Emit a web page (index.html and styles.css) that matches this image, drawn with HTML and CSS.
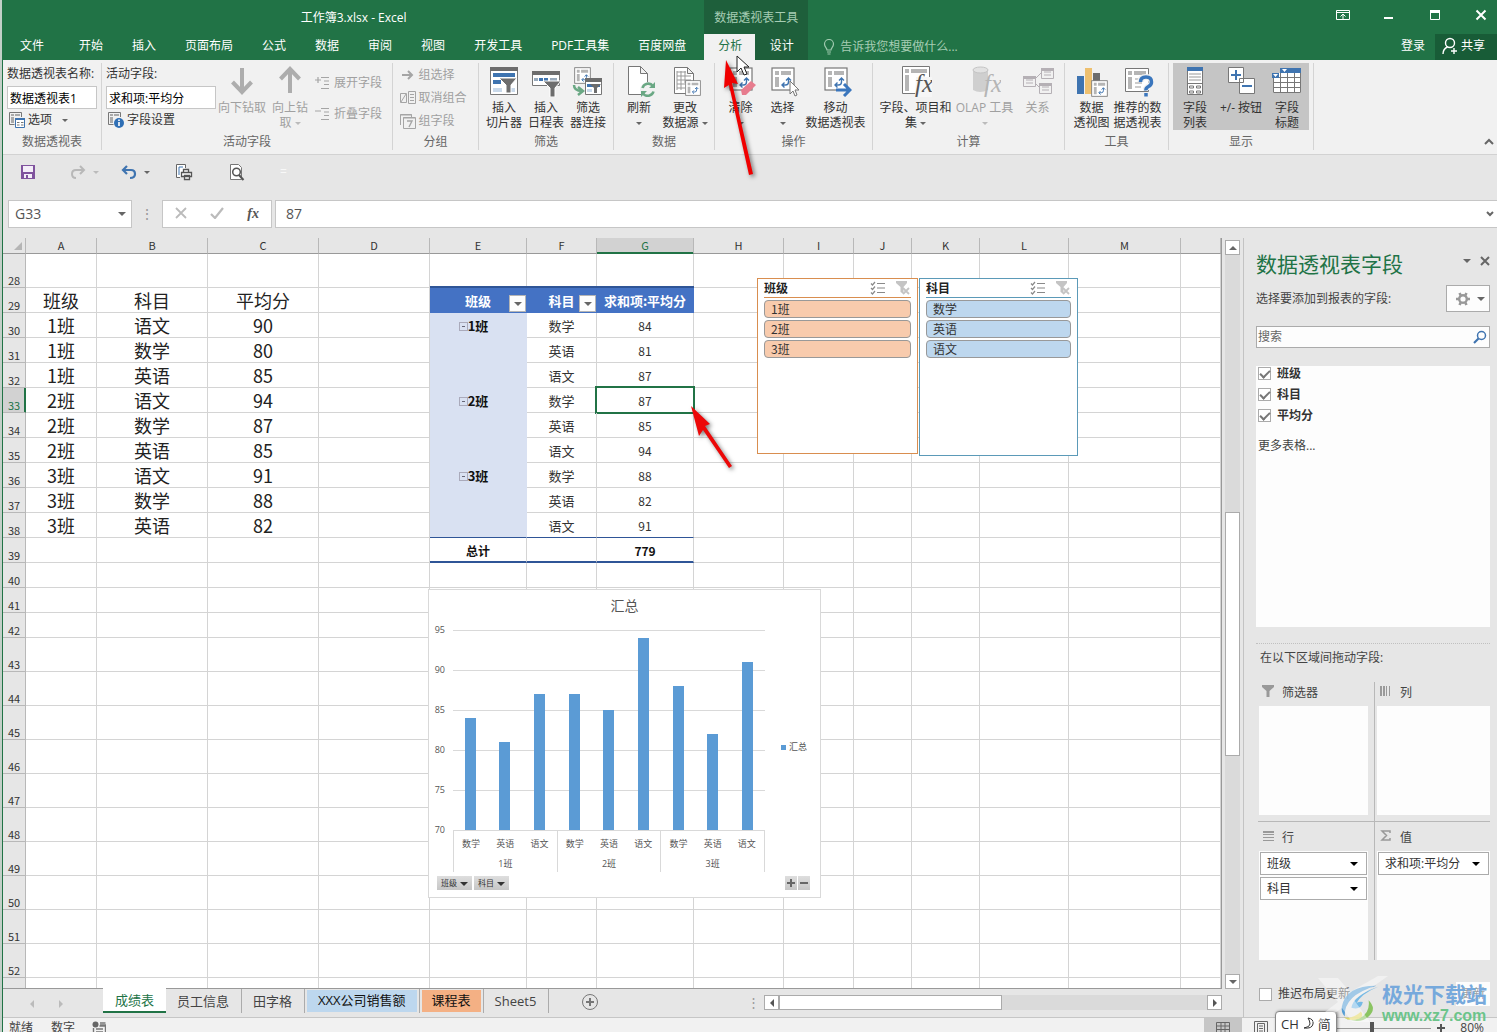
FILE: index.html
```html
<!DOCTYPE html>
<html lang="zh-CN">
<head>
    <meta charset="UTF-8">
    <meta name="viewport" content="width=device-width, initial-scale=1.0">
    <title>工作簿3.xlsx - Excel</title>
    <link rel="stylesheet" href="styles.css">
</head>
<body>
    <!-- shared icon parts -->
    <svg class="defs" aria-hidden="true">
        <symbol id="i-pivot" viewBox="0 0 24 24">
            <rect x="1" y="1" width="22" height="22" fill="#fff" stroke="#777" stroke-width="1.2"/>
            <path d="M4 4h4v4H4zM10 4h10v4H10zM4 10h4v10H4z" fill="#b5b5b5"/>
            <path d="M11.500 18h3q3 0 3-3v-4M13.500 15.500L11 18l2.500 2.500M15 13.500l2.500-2.500 2.500 2.500" fill="none" stroke="#3f74b0" stroke-width="1.400"/>
        </symbol>
        <symbol id="i-multi" viewBox="0 0 16 14">
            <path d="M7 2.500h8M7 7h8M7 11.500h8" stroke="#8a8a8a" stroke-width="1.200"/>
            <path d="M1 2.500l1.500 1.500L5 1M1 7l1.500 1.500L5 5.500M1 11.500L2.500 13 5 10" fill="none" stroke="#8a8a8a" stroke-width="1.200"/>
        </symbol>
        <symbol id="i-clear" viewBox="0 0 16 14">
            <path d="M1 0h11v2L8.500 6v7l-3-2V6L1 2z" fill="#c4c4c4"/>
            <path d="M8 7l6 6M14 7l-6 6" stroke="#c4c4c4" stroke-width="1.800"/>
        </symbol>
    </svg>

    <div class="app">
        <header class="header">
            <div class="doc-title">工作簿3.xlsx - Excel</div>
            <div class="context-title">数据透视表工具</div>
            <div class="window-controls">
                <button class="win-btn" aria-label="功能区显示选项"><svg width="14" height="12" viewBox="0 0 14 12"><path d="M.5 1.500h13v9H.5zM.5 3.500h13M7 10V5.500M4.500 7.500L7 5l2.500 2.500" fill="none" stroke="#fff"/></svg></button>
                <button class="win-btn" aria-label="最小化"><svg width="12" height="12" viewBox="0 0 12 12"><path d="M1 9h9" stroke="#fff" stroke-width="2"/></svg></button>
                <button class="win-btn" aria-label="最大化"><svg width="12" height="12" viewBox="0 0 12 12"><path d="M1.500 2.500h9v8h-9z" fill="none" stroke="#fff"/><path d="M1 1h10v3H1z" fill="#fff"/></svg></button>
                <button class="win-btn" aria-label="关闭"><svg width="12" height="12" viewBox="0 0 12 12"><path d="M1.500 1.500l9 9M10.500 1.500l-9 9" stroke="#fff" stroke-width="2"/></svg></button>
            </div>
            <nav class="tabs">
                <button class="tab file">文件</button>
                <button class="tab">开始</button>
                <button class="tab">插入</button>
                <button class="tab">页面布局</button>
                <button class="tab">公式</button>
                <button class="tab">数据</button>
                <button class="tab">审阅</button>
                <button class="tab">视图</button>
                <button class="tab">开发工具</button>
                <button class="tab">PDF工具集</button>
                <button class="tab">百度网盘</button>
            </nav>
            <nav class="context-tabs">
                <button class="tab active">分析</button>
                <button class="tab">设计</button>
            </nav>
            <div class="header-tools">
                <button class="tell-me"><svg width="12" height="16" viewBox="0 0 12 16"><path d="M4 11C4 9 1.500 8 1.500 5a4.500 4.500 0 0 1 9 0c0 3-2.500 4-2.500 6zM4 13h4M4.500 15h3" fill="none" stroke="#9fc9ae" stroke-width="1.200"/></svg>告诉我您想要做什么...</button>
                <button class="login">登录</button>
                <button class="share"><svg width="16" height="18" viewBox="0 0 16 18"><circle cx="8" cy="6" r="4.500" fill="none" stroke="#fff" stroke-width="1.400"/><path d="M1 17q0-5 4.500-7M12 11v6M9 14h6" fill="none" stroke="#fff" stroke-width="1.400"/></svg>共享</button>
            </div>
        </header>

        <section class="ribbon">
            <div class="group g-table">
                <div class="group-body">
                    <div class="stack">
                        <label for="pt-name">数据透视表名称:</label>
                        <input id="pt-name" type="text" value="数据透视表1">
                        <button class="small-btn"><svg width="16" height="16" viewBox="0 0 16 16"><path d="M.5 12.500V.5h12V5M.5 12.500h5" fill="none" stroke="#777"/><path d="M2 2h3v2H2zM6 2h5v2H6zM2 5h3v6H2z" fill="#aaa"/><path d="M6.500 6.500h9v9h-9z" fill="#fff" stroke="#3f74b0"/><path d="M6 7h10" stroke="#3f74b0" stroke-width="2"/><path d="M8 10.500h2.500M12 10.500h2.500M8 13h2.500M12 13h2.500" stroke="#777"/></svg>选项<i class="caret spaced"></i></button>
                    </div>
                </div>
                <div class="group-label">数据透视表</div>
            </div>

            <div class="group g-active">
                <div class="group-body">
                    <div class="stack wide">
                        <label for="active-field">活动字段:</label>
                        <input id="active-field" type="text" value="求和项:平均分">
                        <button class="small-btn"><svg width="16" height="16" viewBox="0 0 16 16"><path d="M.5 12.500V.5h12V5M.5 12.500h5" fill="none" stroke="#777"/><path d="M2 2h3v2H2zM6 2h5v2H6zM2 5h3v6H2z" fill="#aaa"/><circle cx="11" cy="11" r="5" fill="#2f6fb5"/><path d="M11 7.500v1.500M11 10v4" stroke="#fff" stroke-width="1.600"/></svg>字段设置</button>
                    </div>
                    <button class="big-btn w48" disabled>
                        <svg width="32" height="32" viewBox="0 0 32 32"><path d="M16 3v22M6.500 17L16 27l9.500-10" fill="none" stroke="#adadad" stroke-width="4"/></svg>
                        向下钻取
                    </button>
                    <button class="big-btn w48" disabled>
                        <svg width="32" height="32" viewBox="0 0 32 32"><path d="M16 28V5M6.500 14L16 4l9.500 10" fill="none" stroke="#adadad" stroke-width="4"/></svg>
                        向上钻<br>取 <i class="caret"></i>
                    </button>
                    <div class="stack expand">
                        <button class="small-btn" disabled><svg width="16" height="14" viewBox="0 0 16 14"><path d="M0 4h6M3 1v6M6 1.500h8M9 5h5M9 8.500h5M6 12.500h8" fill="none" stroke="#a5a5a5" stroke-width="1.200"/></svg>展开字段</button>
                        <button class="small-btn" disabled><svg width="16" height="14" viewBox="0 0 16 14"><path d="M0 4h6M6 1.500h8M9 5h5M9 8.500h5M6 12.500h8" fill="none" stroke="#a5a5a5" stroke-width="1.200"/></svg>折叠字段</button>
                    </div>
                </div>
                <div class="group-label">活动字段</div>
            </div>

            <div class="group g-group">
                <div class="group-body">
                    <div class="stack grouping">
                        <button class="small-btn" disabled><svg width="16" height="16" viewBox="0 0 16 16"><path d="M2 8h10M8 4l4 4-4 4" fill="none" stroke="#a5a5a5" stroke-width="2"/></svg>组选择</button>
                        <button class="small-btn" disabled><svg width="16" height="16" viewBox="0 0 16 16"><path d="M.5 3.500h6v9h-6zM1 12l5-8M8.500 1.500h7v12h-7zM10 4.500h4M10 7.500h4M10 10.500h4" fill="none" stroke="#a5a5a5"/></svg>取消组合</button>
                        <button class="small-btn" disabled><svg width="16" height="16" viewBox="0 0 16 16"><path d="M.5 12V1.500h11V4M3.500 4.500h12v11h-12zM0 2h12M3 5h12" fill="none" stroke="#a5a5a5"/><path d="M7 8h5l-3 6" fill="none" stroke="#a5a5a5" stroke-width="1.400"/></svg>组字段</button>
                    </div>
                </div>
                <div class="group-label">分组</div>
            </div>

            <div class="group g-filter">
                <div class="group-body">
                    <button class="big-btn w42">
                        <svg width="32" height="32" viewBox="0 0 32 32"><path d="M2.500 2.500h27v27h-27z" fill="#fff" stroke="#777"/><path d="M2 2h28v4H2z" fill="#6d6d6d"/><path d="M5 8h22v4H5zM5 15h8v4H5z" fill="#3f74b0"/><path d="M5 23h9v4H5zM23 23h4v4h-4z" fill="#c9d9ea"/><path d="M11 13h18l-6 7v8h-5v-8z" fill="#6d6d6d" stroke="#fff"/></svg>
                        插入<br>切片器
                    </button>
                    <button class="big-btn w42">
                        <svg width="32" height="32" viewBox="0 0 32 32"><path d="M2.500 6.500h27v14h-27z" fill="#fff" stroke="#777"/><path d="M2 6h28v4H2z" fill="#6d6d6d"/><path d="M4 13h4v3H4zM20 13h7v3h-7z" fill="#9ab"/><path d="M9 13h4v3H9zM14 13h4v3h-4z" fill="#3f74b0"/><path d="M13 16h18l-6 7v9h-5v-9z" fill="#6d6d6d" stroke="#fff"/></svg>
                        插入<br>日程表
                    </button>
                    <button class="big-btn w42">
                        <svg width="32" height="32" viewBox="0 0 32 32"><use href="#i-pivot" x="2" y="2" width="17" height="17"/><path d="M13.500 13.500h16v16h-16z" fill="#fff" stroke="#777"/><path d="M13 13h17v4H13z" fill="#6d6d6d"/><path d="M15 19h13v3H15z" fill="#3f74b0"/><path d="M15 24h5v3h-5z" fill="#c9d9ea"/><path d="M18 19h11l-4 4v5h-3v-5z" fill="#6d6d6d"/><path d="M2 20q0 6 8 6M6 22l5 4-5 4" fill="none" stroke="#6aa884" stroke-width="2.500"/></svg>
                        筛选<br>器连接
                    </button>
                </div>
                <div class="group-label">筛选</div>
            </div>

            <div class="group g-data">
                <div class="group-body">
                    <button class="big-btn w42">
                        <svg width="32" height="32" viewBox="0 0 32 32"><path d="M5.500 1.500h12l7 7v21h-19zM17.500 1.500v7h7" fill="#fff" stroke="#777"/><circle cx="25" cy="25" r="8" fill="#f1f1f1"/><path d="M19.500 23a6 6 0 0 1 10.500-2M30.500 26.500a6 6 0 0 1-10.500 2" fill="none" stroke="#6aa884" stroke-width="2.600"/><path d="M32 17v6h-6zM18 32v-6h6z" fill="#6aa884"/></svg>
                        刷新<br><i class="caret"></i>
                    </button>
                    <button class="big-btn w52">
                        <svg width="32" height="32" viewBox="0 0 32 32"><path d="M5.500 2.500h13l6 6v20h-19zM18.500 2.500v6h6" fill="#fff" stroke="#777"/><path d="M8 7h9M8 11h14M8 15h14M8 19h8M8 23h8M8 6v19M12 6v19M16 6v12" stroke="#999" fill="none"/><use href="#i-pivot" x="16" y="15" width="16" height="16"/></svg>
                        更改<br>数据源 <i class="caret"></i>
                    </button>
                </div>
                <div class="group-label">数据</div>
            </div>

            <div class="group g-action">
                <div class="group-body">
                    <button class="big-btn w42">
                        <svg width="32" height="32" viewBox="0 0 32 32"><use href="#i-pivot" x="4" y="2" width="24" height="24"/><path d="M16 25l10-9 5 4-10 10h-4z" fill="#e77c8e"/></svg>
                        清除<br><i class="caret"></i>
                    </button>
                    <button class="big-btn w42">
                        <svg width="32" height="32" viewBox="0 0 32 32"><use href="#i-pivot" x="4" y="2" width="24" height="24"/><path d="M23 16v13l3-3 2 5 2-1-2-5h4z" fill="#fff" stroke="#777"/></svg>
                        选择<br><i class="caret"></i>
                    </button>
                    <button class="big-btn w64">
                        <svg width="32" height="32" viewBox="0 0 32 32"><use href="#i-pivot" x="4" y="2" width="24" height="24"/><path d="M16 25h13M24 19l6 6-6 6" fill="none" stroke="#3a76bd" stroke-width="3"/></svg>
                        移动<br>数据透视表
                    </button>
                </div>
                <div class="group-label">操作</div>
            </div>

            <div class="group g-calc">
                <div class="group-body">
                    <button class="big-btn w76">
                        <svg width="32" height="32" viewBox="0 0 32 32"><path d="M2.500 1.500h27v27h-27z" fill="#fff" stroke="#777"/><path d="M5 4h4v4H5zM11 4h16v4H11zM5 10h4v16H5z" fill="#b5b5b5"/><path d="M16 12h16v20H15z" fill="#f6f6f6"/><text x="15" y="27" class="fx-icon">fx</text></svg>
                        字段、项目和<br>集 <i class="caret"></i>
                    </button>
                    <button class="big-btn w64" disabled>
                        <svg width="32" height="32" viewBox="0 0 32 32"><path d="M4 5v20q7 4 15 0V5" fill="#cfcfcf"/><ellipse cx="11.500" cy="5" rx="7.500" ry="3" fill="#e2e2e2" stroke="#c4c4c4"/><text x="15" y="27" class="fx-icon dim">fx</text></svg>
                        OLAP 工具<br><i class="caret"></i>
                    </button>
                    <button class="big-btn w42" disabled>
                        <svg width="32" height="32" viewBox="0 0 32 32"><path d="M1.500 11.500h12v10h-12zM19.500 3.500h12v10h-12zM17.500 18.500h12v10h-12zM13 14l6-6M13 18l5 5M4 15h7M4 18h7M22 7h7M22 10h7M20 22h7M20 25h7" fill="none" stroke="#b5b0b5"/><path d="M1 11h13v3H1zM19 3h13v3H19zM17 18h13v3H17z" fill="#b5b0b5"/></svg>
                        关系
                    </button>
                </div>
                <div class="group-label">计算</div>
            </div>

            <div class="group g-tools">
                <div class="group-body">
                    <button class="big-btn w42">
                        <svg width="32" height="32" viewBox="0 0 32 32"><path d="M1 11h7v18H1z" fill="#3f74b0"/><path d="M9 3h7v26H9z" fill="#eec06f"/><path d="M17 8h7v12h-7z" fill="#6d6d6d"/><use href="#i-pivot" x="15" y="15" width="17" height="17"/></svg>
                        数据<br>透视图
                    </button>
                    <button class="big-btn w52">
                        <svg width="32" height="32" viewBox="0 0 32 32"><path d="M3.500 3.500h23v23h-23z" fill="#fff" stroke="#777"/><path d="M6 6h4v4H6zM12 6h12v4H12zM6 12h4v12H6z" fill="#b5b5b5"/><path d="M13 14h9M13 18h7M13 22h6" stroke="#999"/><path d="M18.500 17q0-5 5.500-5t5.500 5q0 3-3 4.500t-2.500 4M24 28v3.500" fill="none" stroke="#f1f1f1" stroke-width="6"/><path d="M18.500 17q0-5 5.500-5t5.500 5q0 3-3 4.500t-2.500 4M24 28v3.500" fill="none" stroke="#3a76bd" stroke-width="3.500"/></svg>
                        推荐的数<br>据透视表
                    </button>
                </div>
                <div class="group-label">工具</div>
            </div>

            <div class="group g-show">
                <div class="group-body shaded">
                    <button class="big-btn w42">
                        <svg width="32" height="32" viewBox="0 0 32 32"><path d="M8.500 2.500h15v27h-15z" fill="#fff" stroke="#777"/><path d="M8 2h16v4H8z" fill="#3f74b0"/><path d="M10 9h12M10 12h12M10 15h12" stroke="#999"/><path d="M8 18.500h16M10.500 21h4v2h-4zM17.500 21h4v2h-4zM10.500 26h4v2h-4zM17.500 26h4v2h-4z" fill="none" stroke="#777"/></svg>
                        字段<br>列表
                    </button>
                    <button class="big-btn w52">
                        <svg width="32" height="32" viewBox="0 0 32 32"><path d="M3.500 2.500h15v15h-15zM14.500 13.500h15v15h-15z" fill="#fff" stroke="#777"/><path d="M6 10h10M11 5v10M17 21h10" stroke="#3f74b0" stroke-width="2"/></svg>
                        +/- 按钮
                    </button>
                    <button class="big-btn w42">
                        <svg width="32" height="32" viewBox="0 0 32 32"><path d="M2 8v20h28V4H10v4z" fill="#fff"/><path d="M2.500 8.500v19h27v-24M2 12.500h28M2 17.500h28M2 22.500h28M9.500 8v20M16.500 8v20M23.500 8v20" fill="none" stroke="#777"/><path d="M9 3h21v5H9zM1 8h7v5H1z" fill="#3f74b0"/><path d="M11 4h5l-2.500 3zM2 9h5l-2.500 3z" fill="#fff"/></svg>
                        字段<br>标题
                    </button>
                </div>
                <div class="group-label">显示</div>
            </div>
            <button class="collapse" aria-label="折叠功能区"><svg width="10" height="8" viewBox="0 0 10 8"><path d="M1 6l4-4 4 4" fill="none" stroke="#666" stroke-width="2"/></svg></button>
        </section>

        <div class="quick-access">
            <button aria-label="保存"><svg width="16" height="16" viewBox="0 0 16 16"><path d="M1 1h14v14H1z" fill="#80539e"/><path d="M3 2h10v6H3zM4 10h8v4H4z" fill="#f4eef8"/><path d="M6 11h2v3H6z" fill="#80539e"/></svg></button>
            <button aria-label="恢复"><svg width="16" height="16" viewBox="0 0 16 16"><path d="M14 6H6q-4 0-4 4t4 4M10 2l4 4-4 4" fill="none" stroke="#b8b8b8" stroke-width="2"/></svg><i class="caret dim"></i></button>
            <button aria-label="撤消"><svg width="16" height="16" viewBox="0 0 16 16"><path d="M2 6h8q4 0 4 4t-5 4M6 2L2 6l4 4" fill="none" stroke="#3f74b0" stroke-width="2.200"/></svg><i class="caret"></i></button>
            <button aria-label="快速打印"><svg width="18" height="18" viewBox="0 0 18 18"><path d="M5 14.500H1.500v-13h9V5" fill="#fff" stroke="#666"/><path d="M4 4h4M4 4v8" stroke="#3f74b0" fill="none"/><path d="M6.500 9.500h10v4h-10zM8.500 6.500h5v3h-5zM9.500 12.500h5v4h-5z" fill="#fff" stroke="#555" stroke-width="1.300"/></svg></button>
            <button aria-label="打印预览"><svg width="18" height="18" viewBox="0 0 18 18"><path d="M2.500 1.500h8l3 3v12h-11z" fill="#fff" stroke="#777"/><circle cx="8.500" cy="9" r="3.800" fill="none" stroke="#555" stroke-width="1.500"/><path d="M11 12l4.500 5" stroke="#555" stroke-width="2"/></svg></button>
            <button class="more" aria-label="自定义快速访问工具栏">=</button>
        </div>

        <div class="formula-bar">
            <div class="name-box">
                <input type="text" value="G33" aria-label="名称框">
                <i class="caret large"></i>
            </div>
            <div class="dots">⋮</div>
            <div class="fx-box">
                <button aria-label="取消"><svg width="12" height="12" viewBox="0 0 12 12"><path d="M1 1l10 10M11 1L1 11" stroke="#bbb" stroke-width="1.800"/></svg></button>
                <button aria-label="输入"><svg width="14" height="12" viewBox="0 0 14 12"><path d="M1 7l4 4 8-10" fill="none" stroke="#bbb" stroke-width="2.200"/></svg></button>
                <button class="fx" aria-label="插入函数">fx</button>
            </div>
            <div class="formula">
                <input type="text" value="87" aria-label="编辑栏">
                <svg width="8" height="6" viewBox="0 0 8 6"><path d="M1 1l3 3 3-3" fill="none" stroke="#666" stroke-width="2"/></svg>
            </div>
        </div>

        <main class="workspace">
            <div class="book">
                <div class="book-main">
                    <div class="sheet">
                        <table class="cells" id="cells"></table>

                        <section class="slicer orange">
                            <header><h3>班级</h3><svg width="16" height="14"><use href="#i-multi"/></svg><svg width="16" height="14"><use href="#i-clear"/></svg></header>
                            <button>1班</button>
                            <button>2班</button>
                            <button>3班</button>
                        </section>
                        <section class="slicer blue">
                            <header><h3>科目</h3><svg width="16" height="14"><use href="#i-multi"/></svg><svg width="16" height="14"><use href="#i-clear"/></svg></header>
                            <button>数学</button>
                            <button>英语</button>
                            <button>语文</button>
                        </section>

                        <section class="chart">
                            <h3>汇总</h3>
                            <div class="chart-body">
                                <div class="y-axis"><span>95</span><span>90</span><span>85</span><span>80</span><span>75</span><span>70</span></div>
                                <div class="plot-wrap">
                                    <div class="plot" id="plot"></div>
                                    <div class="x-axis" id="x-axis"></div>
                                </div>
                                <div class="legend">汇总</div>
                            </div>
                            <footer>
                                <button>班级<i class="caret large"></i></button>
                                <button>科目<i class="caret large"></i></button>
                                <button class="zoom first" aria-label="展开整个字段"><svg width="10" height="10"><path d="M1 5h8M5 1v8" stroke="#666" stroke-width="2"/></svg></button>
                                <button class="zoom" aria-label="折叠整个字段"><svg width="10" height="10"><path d="M1 5h8" stroke="#666" stroke-width="2"/></svg></button>
                            </footer>
                        </section>
                    </div>
                    <div class="vscroll">
                        <button aria-label="向上滚动"><i class="caret up"></i></button>
                        <div class="vtrack"><div class="vthumb"></div></div>
                        <button aria-label="向下滚动"><i class="caret large"></i></button>
                    </div>
                </div>
                <div class="sheet-bar">
                    <div class="sheet-nav"><button aria-label="上一个"><i class="caret left"></i></button><button aria-label="下一个"><i class="caret right"></i></button></div>
                    <button class="sheet-tab active">成绩表</button>
                    <button class="sheet-tab">员工信息</button>
                    <button class="sheet-tab">田字格</button>
                    <button class="sheet-tab tint-blue"><span>XXX公司销售额</span></button>
                    <button class="sheet-tab tint-orange"><span>课程表</span></button>
                    <button class="sheet-tab">Sheet5</button>
                    <button class="add-sheet" aria-label="新工作表"><svg width="18" height="18" viewBox="0 0 18 18"><circle cx="9" cy="9" r="7.500" fill="none" stroke="#777"/><path d="M5 9h8M9 5v8" stroke="#777" stroke-width="2"/></svg></button>
                    <div class="hscroll">
                        <span class="dots">⋮</span>
                        <button aria-label="向左滚动"><i class="caret left"></i></button>
                        <div class="htrack"><div class="hthumb"></div></div>
                        <button aria-label="向右滚动"><i class="caret right"></i></button>
                    </div>
                </div>
            </div>

            <aside class="pane">
                <div class="pane-head">
                    <h2>数据透视表字段</h2>
                    <button aria-label="任务窗格选项"><i class="caret large"></i></button>
                    <button aria-label="关闭"><svg width="10" height="10" viewBox="0 0 10 10"><path d="M1 1l8 8M9 1L1 9" stroke="#666" stroke-width="2"/></svg></button>
                </div>
                <div class="pane-sub">
                    <span>选择要添加到报表的字段:</span>
                    <button class="gear" aria-label="工具"><svg width="14" height="14" viewBox="0 0 14 14"><circle cx="7" cy="7" r="3.800" fill="none" stroke="#999" stroke-width="2.400"/><path d="M3.500 1l1.500 3M10.500 1L9 4M3.500 13L5 10M10.500 13L9 10M0 7h3M11 7h3" stroke="#999" stroke-width="2.600"/></svg><i class="caret large"></i></button>
                </div>
                <div class="search">
                    <input type="text" placeholder="搜索" aria-label="搜索">
                    <svg width="14" height="14" viewBox="0 0 14 14"><circle cx="8.500" cy="5.500" r="4" fill="none" stroke="#3f74b0" stroke-width="1.500"/><path d="M5.500 8.500L1 13" stroke="#3f74b0" stroke-width="2.200"/></svg>
                </div>
                <div class="field-list">
                    <label><input type="checkbox" checked>班级</label>
                    <label><input type="checkbox" checked>科目</label>
                    <label><input type="checkbox" checked>平均分</label>
                    <a href="#">更多表格...</a>
                </div>
                <div class="areas-title">在以下区域间拖动字段:</div>
                <div class="areas">
                    <div class="area">
                        <h4><svg width="14" height="14"><path d="M1 1h12v2L8.500 7v6h-3V7L1 3z" fill="#999"/></svg>筛选器</h4>
                        <div class="drop"></div>
                    </div>
                    <div class="area">
                        <h4><svg width="14" height="14"><path d="M2 2v10M5 2v10" stroke="#999" stroke-width="2"/><path d="M7.500 2v10M10.500 2v10" stroke="#999"/></svg>列</h4>
                        <div class="drop"></div>
                    </div>
                    <div class="area">
                        <h4><svg width="14" height="14"><path d="M2 3h11" stroke="#999" stroke-width="2"/><path d="M2 5.500h11M2 8.500h11M2 11.500h11" stroke="#999"/></svg>行</h4>
                        <div class="drop">
                            <button class="chip">班级<i class="caret large"></i></button>
                            <button class="chip">科目<i class="caret large"></i></button>
                        </div>
                    </div>
                    <div class="area">
                        <h4><svg width="14" height="14"><path d="M11 4V2H3l4.500 4.500L3 11h8V9" fill="none" stroke="#999" stroke-width="1.500"/></svg>值</h4>
                        <div class="drop">
                            <button class="chip">求和项:平均分<i class="caret large"></i></button>
                        </div>
                    </div>
                </div>
                <div class="defer">
                    <label><input type="checkbox">推迟布局更新</label>
                    <button disabled>更新</button>
                </div>
            </aside>
        </main>

        <footer class="status-bar">
            <span>就绪</span>
            <span>数字</span>
            <svg width="14" height="14" viewBox="0 0 14 14"><circle cx="3.500" cy="3.500" r="3" fill="#666"/><path d="M8 2h5.500M1.500 7v6.500h12V5h-6M4 8h7M4 11h7M8 4h6" fill="none" stroke="#777" stroke-width="1.400"/></svg>
            <div class="views">
                <button class="on" aria-label="普通"><svg width="14" height="14" viewBox="0 0 14 14"><path d="M.5 1.500h13v11H.5zM.5 5h13M.5 8.500h13M5 1.500v11M9 1.500v11" fill="none" stroke="#666"/></svg></button>
                <button aria-label="页面布局"><svg width="14" height="14" viewBox="0 0 14 14"><path d="M.5.500h13v13H.5zM3.500 2.500h7v10h-7zM5 5h4M5 7.500h4M5 10h4" fill="none" stroke="#666"/></svg></button>
            </div>
            <input class="zoom-range" type="range" min="0" max="100" value="40" aria-label="缩放">
            <button class="plus" aria-label="放大"><svg width="10" height="10"><path d="M1 5h8M5 1v8" stroke="#555" stroke-width="2"/></svg></button>
            <span class="percent">80%</span>
        </footer>
    </div>

    <!-- floating things above the window -->
    <div class="ime">CH<svg width="13" height="13" viewBox="0 0 13 13"><path d="M6 1q6 1 5 6t-9 4q6-1 6-4T6 1z" fill="none" stroke="#333"/></svg>简</div>
    <div class="watermark">
        <svg class="wm-x" width="80" height="48" viewBox="0 0 80 48"><path d="M6 2h20l12 14L66 0h10L42 24l16 22H40L30 32 10 46H0l26-20z" fill="#fff" opacity=".45"/></svg>
        <svg width="44" height="40" viewBox="0 0 46 40"><path d="M40 2Q8 2 4 24q-1 6 3 10Q6 12 40 2z" fill="#3b8fd0" opacity=".85"/><path d="M42 3Q16 12 14 25q10 3 12-6-6-1-8 3Q24 10 42 3z" fill="#68b4e4" opacity=".9"/><path d="M6 35q6 5 16 1 12-5 10-19 9 9 0 17-10 9-26 1z" fill="#79bd4a" opacity=".85"/><path d="M6 35q10 2 18-6 4 6-4 8-8 2-14-2z" fill="#e3d44a" opacity=".85"/></svg>
        <div class="wm-text"><b>极光下载站</b><span>www.xz7.com</span></div>
    </div>
    <svg class="arrow ribbon-arrow" width="40" height="128" viewBox="0 0 40 128"><path d="M7 1l12 24-6-1 21 91-4 1-20-90-5 3z" fill="#f00000"/></svg>
    <svg class="arrow cell-arrow" width="52" height="72" viewBox="0 0 52 72"><path d="M5 3l19 18-5 2 27 40-3 2-26-38-4 6z" fill="#ec0808"/></svg>
    <svg class="pointer" width="14" height="22" viewBox="0 0 14 22"><path d="M1 1v16l4-4 3 7 3-1-3-7h5z" fill="#fff" stroke="#222"/></svg>

    <script src="script.js"></script>
</body>
</html>
```
FILE: styles.css
```css
* {
    box-sizing: border-box;
}
body {
    margin: 0;
    height: 100vh;
    overflow: hidden;
    font-family: "Open Sans", "Noto Sans CJK SC", sans-serif;
    font-size: 12px;
    line-height: 16px;
    color: #333;
    background: #e6e6e6;
}
button, input {
    font: inherit;
    color: inherit;
    margin: 0;
    padding: 0;
    border: 0;
    background: none;
    outline: none;
}
button {
    white-space: nowrap;
}
h2, h3, h4 {
    margin: 0;
    font-weight: normal;
}
svg {
    flex: none;
}
.defs {
    position: absolute;
    width: 0;
    height: 0;
}
.app {
    display: flex;
    flex-direction: column;
    height: calc(100vh + 6px);
    border-left: 1px solid #217346;
    box-shadow: -2px 0 #c3cfc8;
    margin-left: 2px;
}
.caret {
    display: inline-block;
    flex: none;
    border: 3px solid transparent;
    border-top-color: #666;
    border-bottom: 0;
    margin-left: 3px;
    vertical-align: middle;
}
.caret.spaced { margin-left: 7px; }
.caret.large { border-width: 4px 4px 0; }
.caret.dim { border-top-color: #bbb; }
.caret.up { border-width: 0 4px 4px; border-bottom: 4px solid #666; }
.caret.left { border-width: 4px 4px 4px 0; border-style: solid; border-color: transparent #555; }
.caret.right { border-width: 4px 0 4px 4px; border-style: solid; border-color: transparent #555; }

/* header */
.header {
    display: grid;
    grid-template-columns: auto auto 1fr;
    grid-template-rows: 34px 26px;
    flex: none;
    background: #217346;
    color: #fff;
}
.doc-title, .context-title {
    display: flex;
    align-items: center;
    justify-content: center;
    padding-top: 1px;
}
.context-title {
    background: #1e5f3b;
    color: #a6cdb4;
}
.window-controls {
    display: flex;
    justify-content: flex-end;
}
.win-btn {
    width: 46px;
    padding-left: 13px;
}
.tabs {
    display: flex;
    gap: 1px;
    padding-right: 4px;
}
.tab {
    padding: 0 14px 2px;
}
.tab.file {
    padding: 0 17px 2px;
    margin-right: 3px;
}
.context-tabs {
    display: grid;
    grid-template-columns: 51px 53px;
    background: #1e5f3b;
}
.tab.active {
    background: #f1f1f1;
    color: #217346;
}
.header-tools {
    display: flex;
    align-items: stretch;
}
.tell-me {
    display: flex;
    align-items: center;
    gap: 5px;
    margin-right: auto;
    padding-left: 15px;
    color: #a6cdb4;
}
.login {
    padding: 0 10px 2px;
}
.share {
    display: flex;
    align-items: center;
    gap: 3px;
    padding: 0 12px 2px 7px;
    background: #185c37;
}

/* ribbon */
.ribbon {
    display: flex;
    flex: none;
    height: 95px;
    padding: 3px 0 4px;
    background: #f1f1f1;
    border-bottom: 1px solid #d2d2d2;
}
.group {
    display: flex;
    flex-direction: column;
    flex: none;
    border-right: 1px solid #d4d4d4;
}
.g-table { width: 99px; }
.g-active { width: 291px; }
.g-group { width: 86px; }
.g-filter { width: 135px; }
.g-data { width: 101px; }
.g-action { width: 158px; }
.g-calc { width: 192px; }
.g-tools { width: 104px; }
.g-show { width: 145px; }
.group-body {
    display: flex;
    justify-content: center;
    height: 69px;
    padding-top: 2px;
}
.g-active .group-body {
    justify-content: flex-start;
    padding-left: 4px;
}
.group-body.shaded {
    background: #c5c5c5;
    margin: 0 4px;
}
.group-label {
    flex: 1;
    padding-top: 4px;
    text-align: center;
    color: #666;
}
.stack {
    display: flex;
    flex-direction: column;
    align-items: flex-start;
    flex: none;
    width: 90px;
    padding-top: 1px;
}
.stack.wide {
    width: 110px;
    margin-right: 2px;
}
.stack label { white-space: nowrap; }
.stack input {
    width: 100%;
    height: 23px;
    margin: 4px 0 3px;
    padding: 0 2px;
    color: #000;
    background: #fff;
    border: 1px solid #c6c6c6;
}
.stack.expand {
    width: 72px;
    padding: 10px 0 0 1px;
    gap: 15px;
}
.stack.grouping {
    width: 72px;
    padding-top: 2px;
    gap: 7px;
}
.small-btn {
    display: flex;
    align-items: center;
    gap: 3px;
    height: 16px;
    padding-left: 2px;
}
.stack.grouping .small-btn, .stack.expand .small-btn {
    padding-left: 0;
}
.big-btn {
    display: flow-root;
    flex: none;
    align-self: flex-start;
    line-height: 15px;
    text-align: center;
}
.big-btn svg {
    display: block;
    margin: 0 auto 3px;
}
.big-btn .caret {
    margin-left: 0;
}
.w42 { width: 42px; }
.w48 { width: 48px; }
.w52 { width: 50px; }
.w64 { width: 64px; }
.w76 { width: 74px; }
button:disabled { color: #a0a0a0; }
button:disabled .caret { border-top-color: #bbb; }
.fx-icon {
    font: italic 25px "Liberation Serif", serif;
    fill: #555;
}
.fx-icon.dim { fill: #b5b5b5; }
.collapse {
    margin-left: auto;
    align-self: flex-end;
    width: 16px;
}

/* quick access + formula bar */
.quick-access {
    display: grid;
    grid-template-columns: 50px 51px 54px 53px 52px 16px;
    flex: none;
    height: 45px;
    padding: 8px 0 0 17px;
}
.quick-access button {
    display: flex;
    align-items: center;
    height: 18px;
}
.quick-access .caret { margin-left: 7px; }
.quick-access .more { color: #f8f8f8; }
.formula-bar {
    display: flex;
    flex: none;
    height: 28px;
    margin: 0 0 10px 5px;
    font-size: 14px;
    color: #555;
}
.name-box, .fx-box, .formula {
    display: flex;
    align-items: center;
    background: #fff;
    border: 1px solid #c6c6c6;
}
.name-box {
    width: 124px;
    padding: 0 5px 0 6px;
}
.name-box input {
    flex: 1;
    min-width: 0;
}
.dots {
    width: 30px;
    text-align: center;
    line-height: 28px;
    color: #999;
}
.fx-box {
    width: 110px;
    justify-content: space-between;
    padding: 0 12px;
}
.fx {
    font: italic bold 14px "Liberation Serif", serif;
    color: #555;
}
.formula {
    flex: 1;
    margin-left: 3px;
    padding: 0 3px 0 10px;
    border-right: 0;
}
.formula input { flex: 1; }

/* workspace */
.workspace {
    display: flex;
    flex: 1;
    min-height: 0;
}
.book {
    display: flex;
    flex-direction: column;
    flex: 1;
    min-width: 0;
}
.book-main {
    display: flex;
    flex: 1;
    min-height: 0;
}
.sheet {
    position: relative;
    flex: 1;
    min-width: 0;
    overflow: hidden;
    background: #fff;
    border-right: 1px solid #999;
    border-bottom: 1px solid #999;
}
.cells {
    width: 100%;
    table-layout: fixed;
    border-collapse: separate;
    border-spacing: 0;
    font-family: "Noto Sans CJK SC", sans-serif;
}
.cells th, .cells td {
    position: relative;
    height: 25px;
    padding: 0;
    text-align: center;
    font-weight: normal;
    white-space: nowrap;
    border-right: 1px solid #d4d4d4;
    border-bottom: 1px solid #d4d4d4;
}
.cells th {
    background: #e6e6e6;
    color: #333;
    font-size: 11px;
    line-height: 13px;
    border-color: #b8b8b8;
    vertical-align: bottom;
}
.cells thead th {
    height: 16px;
    line-height: 15px;
    border-bottom-color: #999;
}
.cells thead th.on {
    background: #d2d2d2;
    color: #217346;
    border-bottom-color: #217346;
    box-shadow: inset 0 -1px #217346;
}
.cells tbody th.on {
    background: #d2d2d2;
    color: #217346;
    border-right-color: #217346;
    box-shadow: inset -1px 0 #217346;
}
.cells tr.tall td, .cells tr.tall th { height: 34px; }
.corner::after {
    content: "";
    position: absolute;
    right: 3px;
    bottom: 3px;
    border: 4px solid #b5b5b5;
    border-top-color: transparent;
    border-left-color: transparent;
}
.cells td.data {
    font-size: 18px;
    line-height: 24px;
    color: #222;
}
.cells td.pv {
    padding-top: 2px;
    font-size: 13px;
    line-height: 18px;
    color: #333;
}
.cells td.pv.value { font-size: 12px; }
.cells td.pv-head {
    font-size: 13px;
    font-weight: bold;
    color: #fff;
    background: #4472c4;
    border-color: #4472c4;
    box-shadow: 0 -2px #2f5597;
}
.cells td.pv-label {
    font-weight: bold;
    color: #111;
    background: #d9e1f2;
    border-color: #d9e1f2;
}
.cells td.pv-last { border-bottom-color: #2f5597; }
.cells td.pv-total {
    font-size: 12px;
    font-weight: bold;
    color: #111;
    border-bottom: 2px solid #2f5597;
}
.cells td.pv-label span { position: relative; }
.cells td.pv-label span::before {
    content: "";
    position: absolute;
    left: -9px;
    top: 6px;
    width: 7px;
    height: 7px;
    border: 1px solid #aab;
    background: linear-gradient(#667, #667) center / 3px 1px no-repeat;
}
.cells td.selected::after {
    content: "";
    position: absolute;
    inset: -2px;
    border: 2px solid #217346;
}
.filter-btn {
    position: absolute;
    right: 0;
    bottom: 0;
    display: flex;
    align-items: center;
    justify-content: center;
    width: 17px;
    height: 17px;
    background: #fdfdfd;
    border: 1px solid #b5b5b5;
}
.filter-btn .caret { margin: 0; }

/* slicers */
.slicer {
    position: absolute;
    top: 40px;
    display: flex;
    flex-direction: column;
    gap: 2px;
    padding: 0 6px;
    background: #fff;
    font-family: "Noto Sans CJK SC", sans-serif;
}
.slicer.orange {
    left: 754px;
    width: 161px;
    height: 176px;
    border: 1px solid #d98e4f;
}
.slicer.blue {
    left: 916px;
    width: 159px;
    height: 178px;
    border: 1px solid #5b9ab8;
}
.slicer header {
    display: flex;
    align-items: center;
    gap: 9px;
    height: 19px;
    padding-bottom: 1px;
}
.slicer.orange header { border-bottom: 1px solid #d98e4f; }
.slicer.blue header { border-bottom: 1px solid #5b9ab8; }
.slicer h3 {
    flex: 1;
    font-size: 12px;
    font-weight: bold;
    color: #222;
}
.slicer button {
    height: 18px;
    padding-left: 6px;
    text-align: left;
    line-height: 16px;
    border: 1px solid #999;
    border-radius: 4px;
}
.slicer.orange button { background: #f8cbad; }
.slicer.blue button { background: #bdd7ee; }

/* chart */
.chart {
    position: absolute;
    left: 425px;
    top: 351px;
    display: flex;
    flex-direction: column;
    width: 393px;
    height: 309px;
    background: #fff;
    border: 1px solid #d9d9d9;
    color: #555;
}
.chart h3 {
    padding-top: 6px;
    font-size: 14px;
    line-height: 20px;
    text-align: center;
}
.chart-body {
    display: flex;
    padding-top: 14px;
    font-size: 9px;
}
.y-axis {
    display: flex;
    flex-direction: column;
    gap: 28px;
    width: 16px;
    margin-right: 8px;
    line-height: 12px;
    text-align: right;
}
.y-axis span:first-child { margin-top: -6px; }
.plot-wrap { width: 312px; }
.plot {
    display: grid;
    grid-template-columns: repeat(9, 1fr);
    align-items: end;
    justify-items: center;
    height: 201px;
    border-bottom: 1px solid #d9d9d9;
    background: repeating-linear-gradient(#d9d9d9 0 1px, transparent 1px 40px);
}
.plot i {
    width: 11px;
    background: #5b9bd5;
}
.x-axis {
    display: grid;
    grid-template-columns: repeat(3, 1fr);
    height: 41px;
    border-left: 1px solid #d9d9d9;
    text-align: center;
    line-height: 20px;
}
.x-axis div {
    display: grid;
    grid-template-columns: repeat(3, 1fr);
    grid-template-rows: 20px 18px;
    padding-top: 3px;
    border-right: 1px solid #d9d9d9;
}
.x-axis b {
    grid-column: 1 / 4;
    font-weight: normal;
}
.legend {
    align-self: center;
    margin-left: 16px;
    padding-bottom: 8px;
}
.legend::before {
    content: "";
    display: inline-block;
    width: 5px;
    height: 5px;
    margin-right: 3px;
    background: #5b9bd5;
}
.chart footer {
    display: flex;
    gap: 2px;
    padding: 4px 10px 0 8px;
    font-size: 8px;
    line-height: 14px;
    color: #333;
}
.chart footer button {
    height: 14px;
    padding: 0 4px;
    background: linear-gradient(#dedede, #c6c6c6);
}
.chart footer .caret { border-top-color: #333; }
.chart footer .zoom {
    display: flex;
    align-items: center;
    width: 12px;
    padding: 0 1px;
}
.chart footer .zoom.first {
    margin-left: auto;
    margin-right: -1px;
}

/* scrollbars */
.vscroll {
    display: flex;
    flex-direction: column;
    width: 21px;
    padding: 2px 3px 0;
}
.vscroll button, .hscroll button {
    display: flex;
    align-items: center;
    justify-content: center;
    flex: none;
    width: 15px;
    height: 15px;
    background: #fff;
    border: 1px solid #ababab;
}
.vscroll .caret, .hscroll .caret { margin: 0; }
.vtrack {
    display: flex;
    flex-direction: column;
    flex: 1;
    background: #dadada;
}
.vthumb {
    height: 34%;
    margin-top: auto;
    margin-bottom: 218px;
    background: #fff;
    border: 1px solid #ababab;
}
.sheet-bar {
    display: flex;
    flex: none;
    height: 28px;
    padding-right: 21px;
    font-size: 13px;
    color: #444;
}
.sheet-nav {
    display: flex;
    gap: 22px;
    width: 100px;
    padding: 0 0 2px 24px;
}
.sheet-nav .left { border-right-color: #bbb; }
.sheet-nav .right { border-left-color: #bbb; }
.sheet-tab {
    height: 24px;
    padding: 0 12px 1px 11px;
    border-right: 1px solid #ababab;
}
.sheet-tab.active {
    height: 25px;
    margin-top: -1px;
    padding: 0 12px;
    color: #217346;
    background: #fff;
    border: 0;
    border-bottom: 2px solid #217346;
    position: relative;
}
.sheet-tab span {
    display: block;
    height: 22px;
    padding: 0 11px;
    line-height: 20px;
    color: #111;
}
.sheet-tab.tint-blue, .sheet-tab.tint-orange { padding: 0 2px; }
.tint-blue span { background: #bdd7ee; }
.tint-orange span {
    padding: 0 10px;
    background: #f4b084;
}
.add-sheet {
    margin-left: 32px;
    height: 26px;
}
.add-sheet svg { display: block; }
.hscroll {
    display: flex;
    flex: 0 0 475px;
    height: 15px;
    margin: 6px 0 0 auto;
}
.hscroll .dots { width: 17px; line-height: 15px; text-align: left; }
.htrack {
    flex: 1;
    background: #dadada;
}
.hthumb {
    width: 52%;
    height: 15px;
    background: #fff;
    border: 1px solid #ababab;
}

/* field pane */
.pane {
    display: flex;
    flex-direction: column;
    flex: none;
    width: 254px;
    padding: 0 7px 0 12px;
    border-left: 1px solid #c3c3c3;
}
.pane-head {
    display: flex;
    align-items: center;
    gap: 9px;
    padding: 12px 0 0;
    height: 42px;
}
.pane-head h2 {
    flex: 1;
    font-size: 21px;
    line-height: 28px;
    padding-bottom: 2px;
    color: #217346;
}
.pane-head button {
    display: flex;
    align-self: flex-start;
    height: 22px;
    align-items: center;
}
.pane-sub {
    display: flex;
    justify-content: space-between;
    align-items: center;
    height: 27px;
    margin-top: 5px;
    color: #444;
}
.gear {
    display: flex;
    align-items: center;
    gap: 4px;
    width: 44px;
    height: 27px;
    padding-left: 9px;
    background: #fdfdfd;
    border: 1px solid #ababab;
}
.search {
    display: flex;
    align-items: center;
    height: 22px;
    margin: 14px 0 18px;
    padding: 0 2px 0 1px;
    background: #fdfdfd;
    border: 1px solid #ababab;
}
.search input {
    flex: 1;
    min-width: 0;
    line-height: 18px;
    padding-bottom: 1px;
}
.search input::placeholder { color: #666; }
.field-list {
    flex: 1;
    padding: 0 2px;
    background: #fdfdfd;
}
.field-list label {
    display: flex;
    align-items: flex-start;
    height: 21px;
    font-weight: bold;
    color: #333;
}
.pane input[type="checkbox"] {
    appearance: none;
    width: 13px;
    height: 13px;
    margin: 1px 6px 0 0;
    background: #fff;
    border: 1px solid #ababab;
}
.pane input[type="checkbox"]:checked::after {
    content: "";
    display: block;
    width: 8px;
    height: 4px;
    margin: 2px 0 0 1px;
    border: solid #777;
    border-width: 0 0 2px 2px;
    transform: rotate(-45deg);
}
.field-list a {
    display: block;
    margin-top: 9px;
    color: #444;
    text-decoration: none;
}
.areas-title {
    margin-top: 16px;
    padding: 6px 0 0 4px;
    border-top: 1px dotted #c0c0c0;
    color: #444;
}
.areas {
    display: grid;
    grid-template-columns: 117px 1fr;
    margin: 16px 0 0 2px;
}
.area {
    padding: 0 6px 6px 1px;
    border-right: 1px solid #b8b8b8;
    border-bottom: 1px solid #b8b8b8;
}
.area:nth-child(even) {
    padding: 0 0 6px 2px;
    border-right: 0;
}
.area:nth-child(n+3) {
    border-bottom: 0;
    padding-bottom: 0;
    padding-top: 5px;
}
.area h4 {
    display: flex;
    gap: 7px;
    height: 24px;
    padding: 2px 0 0 2px;
    font-size: 12px;
    line-height: 18px;
    color: #444;
}
.drop {
    height: 109px;
    padding: 1px;
    background: #fdfdfd;
}
.chip {
    display: flex;
    justify-content: space-between;
    align-items: center;
    width: 100%;
    height: 23px;
    margin-bottom: 2px;
    padding: 0 8px 0 6px;
    background: #fff;
    border: 1px solid #ababab;
}
.chip .caret { border-top-color: #000; }
.defer {
    display: flex;
    justify-content: space-between;
    align-items: center;
    height: 24px;
    margin: 22px 0 11px;
    padding-left: 3px;
    color: #444;
}
.defer label {
    display: flex;
    align-items: center;
}
.defer button {
    width: 34px;
    height: 24px;
    background: #fdfdfd;
}

/* status bar */
.status-bar {
    display: flex;
    align-items: center;
    flex: none;
    height: 21px;
    padding-left: 6px;
    background: #f1f1f1;
    border-top: 1px solid #c6c6c6;
    color: #444;
}
.status-bar span + span { margin: 0 17px 0 18px; }
.views {
    display: flex;
    align-self: stretch;
    margin-left: auto;
}
.views button {
    width: 38px;
}
.views svg { display: block; margin: 0 auto; }
.views .on { background: #c6c6c6; }
.zoom-range {
    appearance: none;
    width: 100px;
    height: 12px;
    margin-left: 51px;
    background: linear-gradient(#999, #999) center / 100% 1px no-repeat;
}
.zoom-range::-webkit-slider-thumb {
    appearance: none;
    width: 4px;
    height: 12px;
    background: #555;
}
.plus {
    margin-left: 5px;
    width: 10px;
}
.plus svg { display: block; }
.status-bar .percent { margin: 0 13px 0 14px; }

/* floating */
.ime {
    position: absolute;
    left: 1275px;
    top: 1011px;
    display: flex;
    align-items: center;
    gap: 3px;
    height: 30px;
    padding: 0 5px 5px;
    background: #fff;
    border: 1px solid #888;
    border-radius: 4px;
    box-shadow: 1px 0 3px rgba(0, 0, 0, 0.4);
    font-size: 13px;
}
.watermark {
    position: absolute;
    right: 10px;
    bottom: 6px;
    display: flex;
    align-items: center;
    height: 46px;
}
.wm-x {
    position: absolute;
    left: -26px;
    top: -4px;
}
.wm-text b {
    display: block;
    font-size: 21px;
    line-height: 26px;
    color: #76a9dc;
}
.wm-text span {
    display: block;
    font: bold 16px/18px "Liberation Sans", sans-serif;
    color: #6cc48a;
}
.arrow {
    position: absolute;
    filter: drop-shadow(2px 2px 2px rgba(0, 0, 0, 0.5));
}
.ribbon-arrow { left: 719px; top: 59px; }
.cell-arrow { left: 686px; top: 403px; }
.pointer {
    position: absolute;
    left: 736px;
    top: 55px;
}
```
FILE: script.js
```js
const columns = [
    ['A', 71], ['B', 111], ['C', 111], ['D', 111], ['E', 97], ['F', 70], ['G', 97],
    ['H', 90], ['I', 70], ['J', 58], ['K', 68], ['L', 89], ['M', 112], ['', 0]
];
const scores = [
    ['班级', '科目', '平均分'],
    ['1班', '语文', 90], ['1班', '数学', 80], ['1班', '英语', 85],
    ['2班', '语文', 94], ['2班', '数学', 87], ['2班', '英语', 85],
    ['3班', '语文', 91], ['3班', '数学', 88], ['3班', '英语', 82]
];
const pivot = [
    ['1班', '数学', 84], ['', '英语', 81], ['', '语文', 87],
    ['2班', '数学', 87], ['', '英语', 85], ['', '语文', 94],
    ['3班', '数学', 88], ['', '英语', 82], ['', '语文', 91]
];
const filterBtn = '<button class="filter-btn" aria-label="筛选"><i class="caret large"></i></button>';

function cell(row, col) {
    if (col < 3 && row >= 29 && row <= 38) {
        return `<td class="data">${scores[row - 29][col]}</td>`;
    }
    if (col >= 4 && col <= 6) {
        const i = col - 4;
        if (row === 29) {
            const text = ['班级', '科目', '求和项:平均分'][i];
            return `<td class="pv pv-head">${text}${i < 2 ? filterBtn : ''}</td>`;
        }
        if (row >= 30 && row <= 38) {
            const value = pivot[row - 30][i];
            let cls = 'pv';
            if (i === 0) cls += ' pv-label';
            if (i === 2) cls += ' value';
            if (row === 38) cls += ' pv-last';
            if (row === 33 && i === 2) cls += ' selected';
            return `<td class="${cls}">${i === 0 && value ? `<span>${value}</span>` : value}</td>`;
        }
        if (row === 39) {
            return `<td class="pv pv-total">${['总计', '', 779][i]}</td>`;
        }
    }
    return '<td></td>';
}

function drawSheet() {
    let html = '<colgroup><col style="width:23px">';
    columns.forEach(([, w]) => {
        html += w ? `<col style="width:${w}px">` : '<col>';
    });
    html += '</colgroup><thead><tr><th class="corner"></th>';
    columns.forEach(([name]) => {
        html += `<th class="${name === 'G' ? 'on' : ''}">${name}</th>`;
    });
    html += '</tr></thead><tbody>';
    const last = 53;
    for (let row = 28; row <= last; row++) {
        const tall = row === 28 || row > 42;
        // the last row is only partly in view, so it has no number
        const label = row < last ? row : '';
        html += `<tr class="${tall ? 'tall' : ''}"><th class="${row === 33 ? 'on' : ''}">${label}</th>`;
        columns.forEach((c, i) => {
            html += cell(row, i);
        });
        html += '</tr>';
    }
    document.getElementById('cells').innerHTML = html + '</tbody>';
}

function drawChart() {
    const min = 70, max = 95;
    document.getElementById('plot').innerHTML = pivot
        .map(p => `<i style="height:${(p[2] - min) / (max - min) * 100}%"></i>`)
        .join('');
    document.getElementById('x-axis').innerHTML = ['1班', '2班', '3班']
        .map(name => `<div><span>数学</span><span>英语</span><span>语文</span><b>${name}</b></div>`)
        .join('');
}

drawSheet();
drawChart();
```
